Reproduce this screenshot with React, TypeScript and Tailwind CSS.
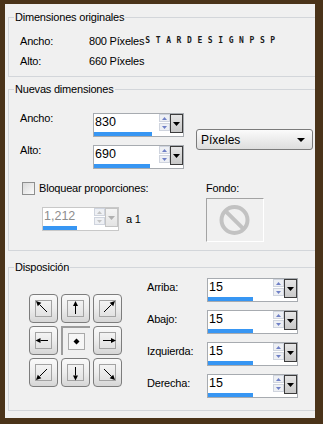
import React from "react";

type Pt = [number, number];

// tail -> tip, drawn inside the 15x15 inner square of each placement button
const ARROWS: Record<string, [Pt, Pt]> = {
  nw: [[11, 11], [0, 0]],
  n: [[7.5, 13], [7.5, 0]],
  ne: [[4, 11], [15, 0]],
  w: [[12, 7.5], [-0.5, 7.5]],
  e: [[3, 7.5], [16, 7.5]],
  sw: [[11, 4], [0, 15]],
  s: [[7.5, 2], [7.5, 15.5]],
  se: [[4, 4], [15, 15]],
};

function Arrow({ dir }: { dir: string }) {
  if (dir === "c") {
    return (
      <svg width="15" height="15" overflow="visible">
        <polygon points="7.5,4.5 10.5,7.5 7.5,10.5 4.5,7.5" fill="#000" />
      </svg>
    );
  }
  const [[x1, y1], [x2, y2]] = ARROWS[dir];
  const len = Math.hypot(x2 - x1, y2 - y1);
  const ux = (x2 - x1) / len;
  const uy = (y2 - y1) / len;
  const bx = x2 - ux * 5;
  const by = y2 - uy * 5;
  const pts = `${x2},${y2} ${bx - uy * 2.5},${by + ux * 2.5} ${bx + uy * 2.5},${by - ux * 2.5}`;
  return (
    <svg width="15" height="15" overflow="visible">
      <line x1={x1} y1={y1} x2={bx} y2={by} stroke="#000" strokeWidth="1" />
      <polygon points={pts} fill="#000" />
    </svg>
  );
}

function Group({ title, className, children }: { title: string; className: string; children: React.ReactNode }) {
  return (
    <div className={"relative border-t border-b border-l border-[#d3d6da] " + className}>
      <span className="absolute left-[5px] top-[-8px] bg-[#f0f0f0] px-[1px] leading-[14px]">{title}</span>
      {children}
    </div>
  );
}

function Spin({ disabled }: { disabled?: boolean }) {
  const c = disabled ? "#c4c4c4" : "#6f80c6";
  return (
    <div className="flex w-[11px] flex-col gap-px">
      <div className="flex h-[8px] items-center justify-center border border-[#cfd4de] bg-[#eef0f4]">
        <svg width="5" height="3"><polygon points="2.5,0 5,3 0,3" fill={c} /></svg>
      </div>
      <div className="flex h-[8px] items-center justify-center border border-[#cfd4de] bg-[#eef0f4]">
        <svg width="5" height="3"><polygon points="0,0 5,0 2.5,3" fill={c} /></svg>
      </div>
    </div>
  );
}

function NumField({ value, bar, text = 65, disabled }: { value: string; bar: number; text?: number; disabled?: boolean }) {
  return (
    <div className={"flex h-[24px] border bg-white " + (disabled ? "border-[#c8c8c8]" : "border-[#a7abb0]")}>
      <div className="flex flex-col" style={{ width: text + 11 }}>
        <div className="flex h-[17px]">
          <span className={"flex-1 pl-px text-[12.5px] leading-[16px] tracking-normal " + (disabled ? "text-[#8d8d8d]" : "text-black")}>
            {value}
          </span>
          <Spin disabled={disabled} />
        </div>
        <div className="mt-auto h-[4px] bg-[#3796f3]" style={{ width: bar }} />
      </div>
      <div className="flex w-[13px] flex-col">
        <div
          className={
            "flex h-[19px] items-center justify-center border bg-gradient-to-b " +
            (disabled ? "border-[#c4c4c4] from-[#f4f4f4] to-[#e4e4e4]" : "border-[#3c3c3c] from-[#e6e6e6] to-[#c8c8c8]")
          }
        >
          <svg width="7" height="4"><polygon points="0,0 7,0 3.5,4" fill={disabled ? "#b0b0b0" : "#000"} /></svg>
        </div>
      </div>
    </div>
  );
}

function PlaceButton({ dir }: { dir: string }) {
  if (dir === "c") {
    return (
      <div className="flex h-[29px] w-[29px] items-center justify-center border-t-2 border-l-2 border-[#9c9c9c] bg-[#f0f0f0]">
        <div className="h-[17px] w-[17px] border border-[#a9a9a9] bg-[#f6f6f6]">
          <Arrow dir="c" />
        </div>
      </div>
    );
  }
  return (
    <div className="flex h-[29px] w-[29px] items-center justify-center rounded-[4px] border border-[#7d7d7d] bg-gradient-to-b from-[#f9f9f9] via-[#ededed] to-[#d6d6d6]">
      <div className="h-[17px] w-[17px] border border-[#a3a3a3] bg-gradient-to-b from-[#f3f3f3] to-[#e2e2e2]">
        <Arrow dir={dir} />
      </div>
    </div>
  );
}

const MARGINS = [
  { label: "Arriba:", bar: 45 },
  { label: "Abajo:", bar: 45 },
  { label: "Izquierda:", bar: 45 },
  { label: "Derecha:", bar: 45 },
];

export default function App() {
  return (
    <div className="h-[424px] w-[323px] bg-[#4a3319] pt-[4px] pr-[8px] pb-[6px] pl-[5px] font-['Liberation_Sans',Arial,sans-serif] text-[11px] tracking-[-0.2px] text-black">
      <div className="flex h-full flex-col bg-[#f0f0f0] pl-[3px]">
        <Group title="Dimensiones originales" className="mt-[13px] h-[60px]">
          <div className="flex flex-col pt-[13px] pl-[11px]">
            <div className="flex h-[20px] items-center">
              <span className="w-[69px]">Ancho:</span>
              <span>800 Píxeles</span>
              <span className="ml-[1px] font-['DejaVu_Sans_Mono',monospace] text-[8px] font-bold tracking-[5.6px] text-[#1a1a1a]">
                STARDESIGNPSP
              </span>
            </div>
            <div className="flex h-[20px] items-center">
              <span className="w-[69px]">Alto:</span>
              <span>660 Píxeles</span>
            </div>
          </div>
        </Group>

        <Group title="Nuevas dimensiones" className="mt-[12px] h-[162px]">
          <div className="flex items-start pt-[23px] pl-[11px]">
            <div className="flex flex-col gap-[8px]">
              <div className="flex items-start">
                <span className="w-[73px] leading-[10px]">Ancho:</span>
                <div className="w-[91px]">
                  <NumField value="830" bar={58} />
                </div>
              </div>
              <div className="flex items-start">
                <span className="w-[73px] leading-[10px]">Alto:</span>
                <div className="w-[91px]">
                  <NumField value="690" bar={56} />
                </div>
              </div>
            </div>
            <div className="mt-[16px] ml-[12px] flex h-[21px] w-[117px] items-center justify-between rounded-[3px] border border-[#7b7b7b] bg-gradient-to-b from-[#fbfbfb] to-[#dedede] pr-[7px] pl-[4px]">
              <span className="text-[12px] tracking-normal">Píxeles</span>
              <svg width="8" height="4"><polygon points="0,0 8,0 4,4" fill="#000" /></svg>
            </div>
          </div>

          <div className="mt-[12px] flex items-start pl-[13px]">
            <div className="flex w-[184px] flex-col">
              <div className="flex h-[15px] items-center">
                <div className="h-[13px] w-[13px] border border-[#8e8f8f] bg-gradient-to-br from-[#d9d9d9] to-[#fbfbfb]" />
                <span className="ml-[4px]">Bloquear proporciones:</span>
              </div>
              <div className="mt-[11px] flex items-center pl-[20px]">
                <div className="w-[77px]">
                  <NumField value="1,212" bar={34} text={52} disabled />
                </div>
                <span className="ml-[7px]">a 1</span>
              </div>
            </div>
            <div className="flex flex-col">
              <span className="leading-[14px]">Fondo:</span>
              <div className="mt-[3px] h-[44px] w-[58px] border border-t-[#a3a3a3] border-l-[#a3a3a3] border-r-white border-b-white bg-[#f0f0f0]">
                <svg width="56" height="42" className="-mt-px">
                  <circle cx="27.5" cy="22" r="13" fill="none" stroke="#c2c2c2" strokeWidth="4" />
                  <line x1="18.3" y1="12.8" x2="36.7" y2="31.2" stroke="#c2c2c2" strokeWidth="4" />
                </svg>
              </div>
            </div>
          </div>
        </Group>

        <Group title="Disposición" className="mt-[16px] h-[144px]">
          <div className="flex items-start pl-[20px]">
            <div className="mt-[26px] grid grid-cols-3 gap-[3px]">
              {["nw", "n", "ne", "w", "c", "e", "sw", "s", "se"].map((d) => (
                <PlaceButton key={d} dir={d} />
              ))}
            </div>
            <div className="mt-[10px] ml-[25px] flex flex-col gap-[8px]">
              {MARGINS.map((m) => (
                <div key={m.label} className="flex items-start">
                  <span className="w-[60px] leading-[18px]">{m.label}</span>
                  <div className="w-[91px]">
                    <NumField value="15" bar={m.bar} />
                  </div>
                </div>
              ))}
            </div>
          </div>
        </Group>
      </div>
    </div>
  );
}
